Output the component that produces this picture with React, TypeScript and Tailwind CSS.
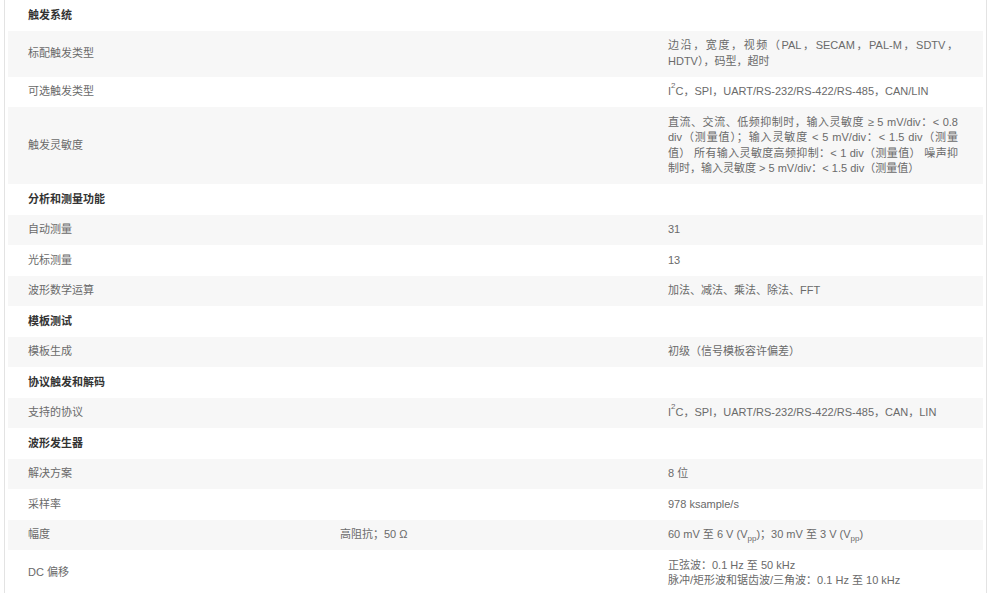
import React from 'react';

type Row = {
  label: string;
  mid?: React.ReactNode;
  value?: React.ReactNode;
  header?: boolean;
};

const Vpp = () => (
  <>
    (V<sub className="text-[8px] align-[-1px] leading-none">pp</sub>)
  </>
);

const I2C = () => (
  <>
    I<sup className="text-[8px] align-[3px] leading-none">2</sup>C
  </>
);

const rows: Row[] = [
  { label: '触发系统', header: true },
  { label: '标配触发类型', value: '边沿，宽度，视频（PAL，SECAM，PAL-M，SDTV，HDTV），码型，超时' },
  { label: '可选触发类型', value: <><I2C />，SPI，UART/RS-232/RS-422/RS-485，CAN/LIN</> },
  {
    label: '触发灵敏度',
    value:
      '直流、交流、低频抑制时，输入灵敏度 ≥ 5 mV/div：< 0.8 div（测量值）；输入灵敏度 < 5 mV/div：< 1.5 div（测量值） 所有输入灵敏度高频抑制：< 1 div（测量值） 噪声抑制时，输入灵敏度 > 5 mV/div：< 1.5 div（测量值）',
  },
  { label: '分析和测量功能', header: true },
  { label: '自动测量', value: '31' },
  { label: '光标测量', value: '13' },
  { label: '波形数学运算', value: '加法、减法、乘法、除法、FFT' },
  { label: '模板测试', header: true },
  { label: '模板生成', value: '初级（信号模板容许偏差）' },
  { label: '协议触发和解码', header: true },
  { label: '支持的协议', value: <><I2C />，SPI，UART/RS-232/RS-422/RS-485，CAN，LIN</> },
  { label: '波形发生器', header: true },
  { label: '解决方案', value: '8 位' },
  { label: '采样率', value: '978 ksample/s' },
  {
    label: '幅度',
    mid: '高阻抗；50 Ω',
    value: <>60 mV 至 6 V <Vpp />；30 mV 至 3 V <Vpp /></>,
  },
  {
    label: 'DC 偏移',
    value: (
      <>
        正弦波：0.1 Hz 至 50 kHz
        <br />
        脉冲/矩形波和锯齿波/三角波：0.1 Hz 至 10 kHz
      </>
    ),
  },
];

export default function App() {
  return (
    <div
      className="min-h-[593px] bg-white pl-[4px] pr-[3px] text-[11px] leading-[15.5px] text-[#6a6a6a]"
      style={{ fontFamily: '"Liberation Sans", "Noto Sans CJK SC", sans-serif' }}
    >
      <div className="border-x border-[#e3e3e3] px-[3px] min-h-[593px]">
        {rows.map((row, i) => (
          <div
            key={i}
            className={`grid grid-cols-[312px_328px_1fr] items-center py-[7.5px] ${i % 2 === 1 ? 'bg-[#f7f7f7]' : 'bg-white'}`}
          >
            <div className={`pl-[20px] ${row.header ? 'font-bold text-[#333]' : ''}`}>{row.label}</div>
            <div className="pl-[20px]">{row.mid}</div>
            <div className="pl-[20px] pr-[25px] text-justify">{row.value}</div>
          </div>
        ))}
      </div>
    </div>
  );
}
